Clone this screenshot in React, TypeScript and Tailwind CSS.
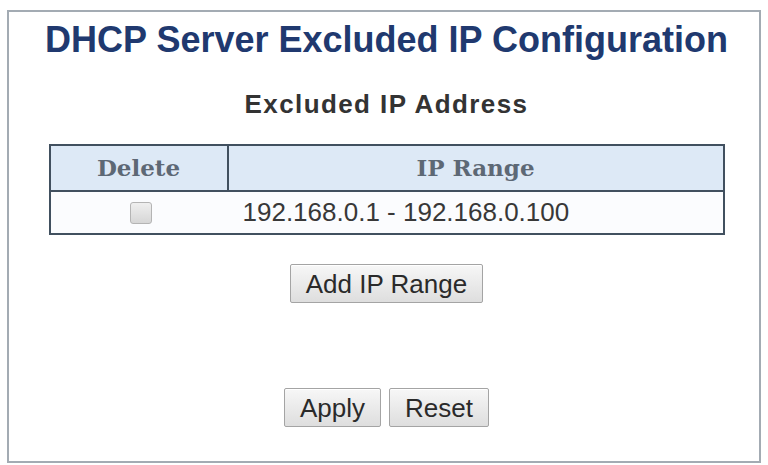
import React from "react";

function Btn({ children }: { children: React.ReactNode }) {
  return (
    <button
      type="button"
      className="h-[39px] px-[15px] rounded-[2px] border border-[#a4a4a4] bg-gradient-to-b from-[#f7f7f7] to-[#dedede] text-[26px] leading-none text-[#2a2a2a] shadow-[inset_0_1px_0_#ffffff]"
      style={{ fontFamily: '"Liberation Sans", Arial, sans-serif' }}
    >
      {children}
    </button>
  );
}

export default function App() {
  const sans = { fontFamily: '"Liberation Sans", Arial, sans-serif' };
  const serif = { fontFamily: '"DejaVu Serif", Georgia, serif' };
  return (
    <div className="w-[768px] h-[465px] bg-white pt-[10px] pl-[7px]" style={sans}>
      <div className="w-[754px] h-[453px] border-2 border-[#a3abb3] bg-white flex flex-col items-center pt-[8px] pl-[5px]">
        <h1 className="text-[36px] leading-[40px] font-bold text-[#20396f] whitespace-nowrap">
          DHCP Server Excluded IP Configuration
        </h1>
        <h2 className="mt-[29px] text-[26px] leading-[30px] font-bold text-[#333333] tracking-[1.4px] whitespace-nowrap">
          Excluded IP Address
        </h2>
        <div className="mt-[25px] w-[676px] border-2 border-[#41505f]">
          <div className="flex h-[46px] bg-[#dde9f6] border-b-2 border-[#41505f]" style={serif}>
            <div className="w-[178px] flex items-center justify-center border-r-2 border-[#41505f] text-[23px] font-bold text-[#5d6875]">
              Delete
            </div>
            <div className="flex-1 flex items-center justify-center text-[23px] font-bold text-[#5d6875]">
              IP Range
            </div>
          </div>
          <div className="flex h-[41px] bg-[#fbfcfe]">
            <div className="w-[180px] flex items-center justify-center">
              <div className="w-[22px] h-[22px] rounded-[3px] border border-[#b4b4b4] bg-gradient-to-b from-[#efefef] to-[#d6d6d6]" />
            </div>
            <div className="flex-1 flex items-center pl-[12px] text-[26px] text-[#383838] whitespace-nowrap">
              192.168.0.1 - 192.168.0.100
            </div>
          </div>
        </div>
        <div className="mt-[29px]">
          <Btn>Add IP Range</Btn>
        </div>
        <div className="mt-[85px] flex gap-[8px]">
          <Btn>Apply</Btn>
          <Btn>Reset</Btn>
        </div>
      </div>
    </div>
  );
}
